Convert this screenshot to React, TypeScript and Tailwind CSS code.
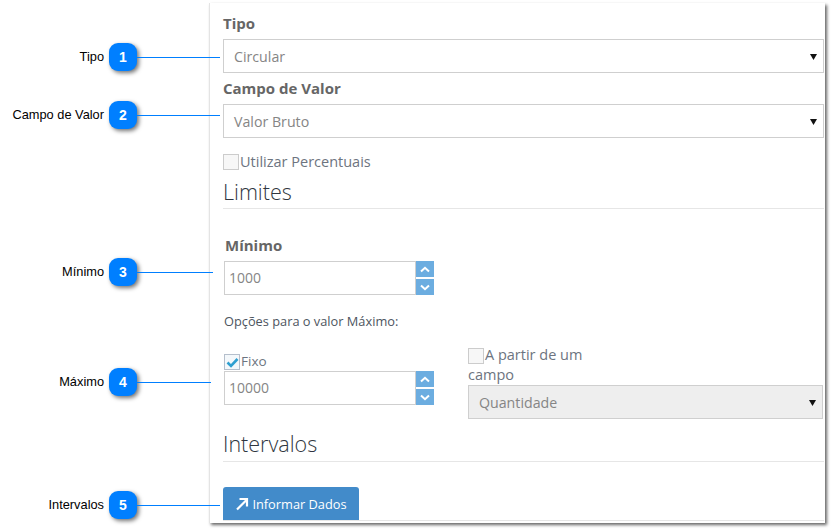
import React from "react";

const open = "font-['Open_Sans',sans-serif]";

function Callout({ n, label, line, mt }: { n: number; label: string; line: string; mt: string }) {
  return (
    <div className={`flex items-center h-7 ${mt}`}>
      <span className="w-[104px] shrink-0 text-right text-[12.8px] leading-7 text-black font-['Liberation_Sans',sans-serif] whitespace-nowrap">{label}</span>
      <div className="ml-[5px] w-7 h-7 shrink-0 rounded-[9px] bg-[#007fff] text-white text-[14px] font-bold flex items-center justify-center shadow-[2px_2px_4px_rgba(0,0,0,0.55)] font-['Liberation_Sans',sans-serif]">{n}</div>
      <div className={`h-px bg-[#007fff] shrink-0 relative z-10 ${line}`} />
    </div>
  );
}

function Arrow() {
  return (
    <svg width="7" height="7" viewBox="0 0 7 7" className="shrink-0">
      <path d="M0 1h7L3.5 7z" fill="#111" />
    </svg>
  );
}

function Select({ value, cls, bg }: { value: string; cls: string; bg: string }) {
  return (
    <div className={`h-[34px] border border-[#cfcfcf] flex items-center justify-between pl-[10px] pr-[6px] text-[14.2px] text-[#858585] ${bg} ${cls}`}>
      <span className="pt-[2px]">{value}</span>
      <Arrow />
    </div>
  );
}

function Check({ checked }: { checked?: boolean }) {
  return (
    <div className={`w-4 h-4 shrink-0 border flex items-center justify-center ${checked ? "border-[#b5bfcc] bg-[#f4f8fb]" : "border-[#cccccc] bg-[#f7f7f7]"}`}>
      {checked && (
        <svg width="13" height="11" viewBox="0 0 13 11">
          <path d="M1.5 5.5 L5 9 L11.5 2" fill="none" stroke="#2f9fd0" strokeWidth="2.6" />
        </svg>
      )}
    </div>
  );
}

function Spin({ value, cls }: { value: string; cls: string }) {
  return (
    <div className={`flex w-[210px] h-[34px] ml-px ${cls}`}>
      <div className="w-[192px] border border-[#cfcfcf] flex items-center pl-[4px] pb-[2px] text-[14px] text-[#858585]">{value}</div>
      <div className="w-[18px] flex flex-col justify-between">
        <div className="h-4 bg-[#6cade0] flex items-center justify-center">
          <svg width="10" height="7" viewBox="0 0 10 7"><path d="M1 5.5 L5 1.8 L9 5.5" fill="none" stroke="#fff" strokeWidth="2" /></svg>
        </div>
        <div className="h-4 bg-[#6cade0] flex items-center justify-center">
          <svg width="10" height="7" viewBox="0 0 10 7"><path d="M1 1.5 L5 5.2 L9 1.5" fill="none" stroke="#fff" strokeWidth="2" /></svg>
        </div>
      </div>
    </div>
  );
}

export default function App() {
  return (
    <div className="w-[837px] h-[532px] bg-white flex overflow-hidden">
      <div className="w-[209px] shrink-0 flex flex-col relative z-10">
        <Callout n={1} label="Tipo" line="w-[83px]" mt="mt-[43px]" />
        <Callout n={2} label="Campo de Valor" line="w-[83px]" mt="mt-[30px]" />
        <Callout n={3} label="Mínimo" line="w-[76px]" mt="mt-[129px]" />
        <Callout n={4} label="Máximo" line="w-[74px]" mt="mt-[82px]" />
        <Callout n={5} label="Intervalos" line="w-[83px]" mt="mt-[95px]" />
      </div>
      <div className={`w-[616px] h-[520px] mt-[3px] bg-white pl-[13px] pr-px border-l border-[#e4e4e4] shadow-[2px_2px_3px_rgba(0,0,0,0.6)] text-[#666] ${open}`}>
        <div className="mt-[10px] h-5 leading-5 text-[15px] font-bold text-[#666]">Tipo</div>
        <Select value="Circular" cls="mt-[6px]" bg="bg-white" />
        <div className="mt-[5px] h-5 leading-5 text-[15px] font-bold text-[#666]">Campo de Valor</div>
        <Select value="Valor Bruto" cls="mt-[6px]" bg="bg-white" />
        <div className="mt-[16px] flex items-center h-4">
          <Check />
          <span className="ml-px text-[14.5px] text-[#6d7480]">Utilizar Percentuais</span>
        </div>
        <div className="mt-[7px] h-[30px] leading-[30px] text-[21.5px] font-light text-[#2f3640]">Limites</div>
        <div className="mt-px h-px bg-[#e6e6e6]" />
        <div className="mt-[26px] ml-[2px] h-5 leading-5 text-[15px] font-bold text-[#666]">Mínimo</div>
        <Spin value="1000" cls="mt-[6px]" />
        <div className="mt-[17px] ml-px h-[18px] leading-[18px] text-[12.8px] text-[#4d5560]">Opções para o valor Máximo:</div>
        <div className="mt-[18px] flex items-start">
          <div className="w-[245px] shrink-0 mt-[6px]">
            <div className="ml-px flex items-center h-4">
              <Check checked />
              <span className="ml-px pb-[2px] text-[13.5px] text-[#6d7480]">Fixo</span>
            </div>
            <Spin value="10000" cls="mt-px" />
          </div>
          <div className="w-[355px]">
            <div className="flex items-center h-4">
              <Check />
              <span className="ml-px pb-[2px] text-[14.5px] text-[#6d7480]">A partir de um</span>
            </div>
            <div className="h-5 mt-[1px] leading-5 text-[14.5px] text-[#6d7480]">campo</div>
            <Select value="Quantidade" cls="" bg="bg-[#eeeeee]" />
          </div>
        </div>
        <div className="mt-[10px] h-[30px] leading-[30px] text-[21.5px] font-light text-[#2f3640]">Intervalos</div>
        <div className="mt-[2px] h-px bg-[#e6e6e6]" />
        <div className="mt-[25px] w-[136px] h-[33px] bg-[#428bca] rounded-t-[3px] text-white text-[12.8px] flex items-center justify-center gap-[3px]">
          <svg width="14" height="14" viewBox="0 0 14 14"><path d="M2 12.5 L11.5 3 M4.5 2 H12 V9.5" fill="none" stroke="#fff" strokeWidth="2.2" /></svg>
          <span className="pt-[2px]">Informar Dados</span>
        </div>
        <div className="h-px bg-[#e6e6e6]" />
      </div>
    </div>
  );
}
